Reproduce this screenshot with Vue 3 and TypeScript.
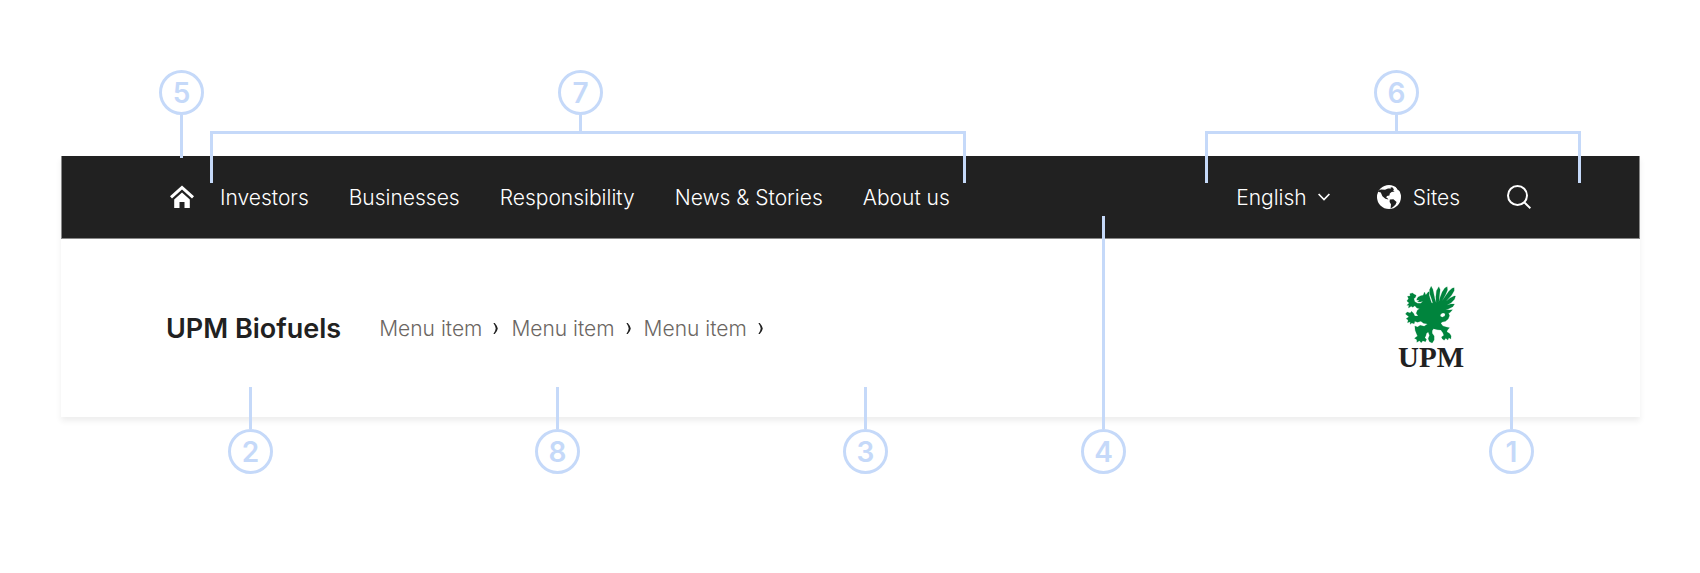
<script setup lang="ts">
interface Callout { n: number; pos: string }

const mainLinks: string[] = ['Investors', 'Businesses', 'Responsibility', 'News & Stories', 'About us']
const menuItems: string[] = ['Menu item', 'Menu item', 'Menu item']
const upper: Callout[] = [
  { n: 5, pos: 'at-home' },
  { n: 7, pos: 'at-links' },
  { n: 6, pos: 'at-tools' },
]
const lower: Callout[] = [
  { n: 2, pos: 'at-title' },
  { n: 8, pos: 'at-menu' },
  { n: 3, pos: 'at-space' },
  { n: 4, pos: 'at-bar' },
  { n: 1, pos: 'at-logo' },
]
</script>

<template>
  <main class="page">
    <header class="header">
      <nav class="topbar" aria-label="Main">
        <a class="home" href="#" aria-label="Home">
          <svg viewBox="0 0 24 24" width="24" height="24" fill="#fff">
            <path d="M12 0.5 24 11.3 22 13.5 12 4.5 2 13.5 0 11.3Z" />
            <path d="M12 7.4 19.8 14.4V23H14.5V17H9.5V23H4.2V14.4Z" />
          </svg>
        </a>
        <ul class="links">
          <li v-for="link in mainLinks" :key="link"><a href="#">{{ link }}</a></li>
        </ul>
        <div class="tools">
          <button type="button" class="tool language">
            English
            <svg viewBox="0 0 12 8" width="12" height="8" fill="none" stroke="#fff" stroke-width="1.7">
              <path d="M0.6 1 6 6.5 11.4 1" />
            </svg>
          </button>
          <button type="button" class="tool">
            <svg viewBox="0 0 24 24" width="24" height="24">
              <circle cx="12" cy="12" r="12" fill="#fff" />
              <path fill="#212121" d="M1.4 5.4 4 4.6 8 4.8 11 3.4 14 3.6 13.6 2.2 15.6 2.4 17 4.4 16 5.2 17.6 6.6 14.6 7 12.8 8.4 12.4 10.6 10 11 9.2 12.6 10.8 13.6 11.4 14.6 8.4 13.8 5.4 11.2 3.8 7.4 1 6.8ZM12.8 14.4 16.4 14.2 19.6 17 18.6 19.6 16 22 13.6 23.4 14 19.2 12.6 17ZM19 2 20.6 4.8 23.6 6.4 22.4 2Z" />
            </svg>
            Sites
          </button>
          <button type="button" class="tool" aria-label="Search">
            <svg viewBox="0 0 24 24" width="24" height="24" fill="none" stroke="#fff" stroke-width="2">
              <circle cx="10.5" cy="10.5" r="9.5" />
              <path d="M17.2 17.2 23.4 23.2" />
            </svg>
          </button>
        </div>
      </nav>
      <div class="subbar">
        <h1 class="title">UPM Biofuels</h1>
        <ul class="menu">
          <li v-for="(item, i) in menuItems" :key="i">
            <a href="#">{{ item }}</a>
            <svg viewBox="0 0 5 11" width="5" height="11" fill="#212121">
              <path d="M0.4 0H1.8Q4.6 3.4 4.8 5.5 4.6 7.6 1.8 11H0.4Q2.6 7.6 2.7 5.5 2.6 3.4 0.4 0Z" />
            </svg>
          </li>
        </ul>
        <a class="logo" href="#" aria-label="UPM">
          <svg viewBox="79 32 152 174" width="51" height="58" fill="#00843d" stroke="#00843d" stroke-width="0.6">
            <path d="M114 71 118 65 126 61 133 60 137 50 141 59 148 50 151 49 151 60 154 70 158 82 162 84 158 70 153 56 152 43 157 33 162 42 165 56 168 70 172 82 171 64 173 46 180 34 184 43 182 60 180 80 184 66 190 50 198 38 205 34 206 44 200 58 190 76 200 62 210 48 220 39 226 37 226 46 218 60 202 78 214 68 226 62 230 62 227 72 217 82 204 90 216 86 227 86 222 94 208 101 200 102 211 104 221 103 213 112 202 114 192 113 186 116 184 122 190 126 198 122 199 116 194 112 200 109 209 112 212 121 208 131 200 138 190 140 186 144 192 152 202 155 212 157 206 164 204 169 213 175 217 182 216 191 210 187 207 194 201 189 196 195 190 190 188 185 195 180 192 172 186 164 176 163 164 160 160 166 160 174 166 182 166 194 160 203 152 199 148 190 152 180 148 170 143 174 141 181 138 187 143 192 140 199 132 196 127 202 122 196 114 201 114 193 107 189 116 182 113 175 109 165 108 152 116 155 124 150 136 153 146 146 134 144 126 138 116 141 108 138 106 145 99 143 94 147 94 139 86 142 88 134 82 130 90 124 80 116 85 110 94 113 98 108 104 114 108 122 118 122 112 114 116 104 122 100 114 98 108 91 102 96 97 93 89 98 90 90 84 90 91 83 84 77 89 70 86 63 94 62 93 55 101 53 106 57 112 60 110 66 105 70 108 79 116 84 126 84 132 78 124 80 116 79 122 73 114 75Z" />
          </svg>
          <span>UPM</span>
        </a>
      </div>
    </header>

    <div v-for="c in upper" :key="c.n" class="callout upper" :class="c.pos">
      <span class="badge">{{ c.n }}</span>
      <span class="stem"></span>
    </div>
    <span class="bracket links-bracket"></span>
    <span class="bracket tools-bracket"></span>
    <div v-for="c in lower" :key="c.n" class="callout lower" :class="c.pos">
      <span class="stem"></span>
      <span class="badge">{{ c.n }}</span>
    </div>
  </main>
</template>

<style>
body {
  margin: 0;
  background: #fff;
}
</style>

<style scoped>
.page {
  position: relative;
  box-sizing: border-box;
  padding: 156px 60px 156px 61px;
  font-family: Inter, "Liberation Sans", sans-serif;
}
.page svg {
  display: block;
  flex: none;
}
.page a {
  color: inherit;
  text-decoration: none;
}
.header {
  box-shadow: 0 4px 6px rgba(0, 0, 0, 0.07);
}
.topbar {
  display: flex;
  align-items: center;
  height: 82px;
  padding: 0 108px;
  background: #212121;
  border: 1px solid #888;
  border-top: 0;
  color: #fff;
  font-size: 21px;
  font-weight: 300;
}
.links,
.menu {
  display: flex;
  margin: 0;
  padding: 0;
  list-style: none;
}
.links {
  gap: 40px;
  margin-left: 26px;
}
.tools {
  display: flex;
  align-items: center;
  gap: 47px;
  margin-left: auto;
}
.tool {
  display: flex;
  align-items: center;
  gap: 12px;
  padding: 0;
  border: 0;
  background: none;
  color: inherit;
  font: inherit;
}
.language {
  gap: 11px;
}
.subbar {
  display: flex;
  align-items: center;
  height: 178px;
  padding: 0 176px 0 105px;
  background: #fff;
}
.title {
  margin: 0;
  color: #212121;
  font-size: 27px;
  font-weight: 600;
}
.menu {
  gap: 13px;
  margin-left: 38px;
  color: #6b6662;
  font-size: 21px;
  font-weight: 300;
}
.menu li {
  display: flex;
  align-items: center;
  gap: 11px;
}
.logo {
  display: flex;
  flex-direction: column;
  align-items: center;
  margin-left: auto;
}
.page .logo {
  color: #212121;
  font: bold 29px/26px "Liberation Serif", serif;
}
.callout {
  position: absolute;
  display: flex;
  flex-direction: column;
  align-items: center;
}
.badge {
  display: flex;
  align-items: center;
  justify-content: center;
  box-sizing: border-box;
  width: 45px;
  height: 45px;
  border: 3px solid #c5d9f9;
  border-radius: 50%;
  color: #c5d9f9;
  font-size: 28px;
  font-weight: 600;
}
.stem {
  width: 3px;
  height: 16px;
  background: #c5d9f9;
}
.upper {
  top: 70px;
}
.lower {
  top: 387px;
}
.lower .stem {
  height: 42px;
}
.bracket {
  position: absolute;
  top: 131px;
  box-sizing: border-box;
  height: 52px;
  border: 3px solid #c5d9f9;
  border-bottom: 0;
}
.links-bracket {
  left: 210px;
  width: 756px;
}
.tools-bracket {
  right: 119px;
  width: 376px;
}
.at-home {
  left: 159px;
}
.at-home .stem {
  height: 43px;
}
.at-links {
  left: 558px;
}
.at-tools {
  right: 281px;
}
.at-title {
  left: 228px;
}
.at-menu {
  left: 535px;
}
.at-space {
  left: 843px;
}
.lower.at-bar {
  top: 216px;
  left: 1081px;
}
.at-bar .stem {
  height: 213px;
}
.at-logo {
  right: 166px;
}
</style>
